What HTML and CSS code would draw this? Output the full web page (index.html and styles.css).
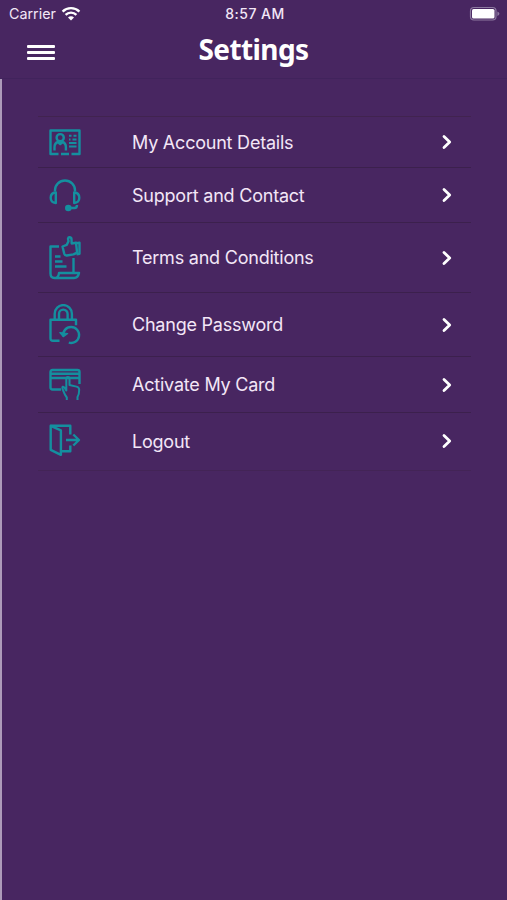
FILE: index.html
```html
<!DOCTYPE html>
<html lang="en">
<head>
    <meta charset="UTF-8">
    <meta name="viewport" content="width=device-width, initial-scale=1.0">
    <title>Settings</title>
    <link rel="stylesheet" href="styles.css">
</head>
<body>
    <div class="status-bar">
        <div class="carrier">
            <span>Carrier</span>
            <svg width="20" height="16" viewBox="0 0 20 16">
                <path d="M1.6 5.6a12 12 0 0 1 16.8 0M4.6 8.9a7.6 7.6 0 0 1 10.8 0" fill="none" stroke="#fff" stroke-width="2.4"/>
                <path d="M10 14.6l-3-3a4.2 4.2 0 0 1 6 0z" fill="#fff"/>
            </svg>
        </div>
        <span class="time">8:57 AM</span>
        <svg class="battery" width="32" height="16" viewBox="0 0 32 16">
            <rect x="1.5" y="1.5" width="25.5" height="12.5" rx="3.5" fill="none" stroke="#8d79a0" stroke-width="1.2"/>
            <rect x="3" y="3" width="22.5" height="9.5" rx="1.6" fill="#fff"/>
            <path d="M28.4 5.4V10q2-.8 2-2.3t-2-2.3z" fill="#8d79a0"/>
        </svg>
    </div>

    <header class="header">
        <button class="menu-btn" aria-label="Menu">
            <span></span>
            <span></span>
            <span></span>
        </button>
        <h1>Settings</h1>
    </header>

    <main class="content">
        <ul class="settings-list">
            <li class="settings-item account">
                <svg class="icon" width="32" height="27" viewBox="0 0 32 27">
                    <path d="M9.5 25H1.5V1.5h29V25h-8M12 25h8"/>
                    <circle cx="11.2" cy="8.7" r="3.6"/>
                    <path d="M5.5 21.5v-3.2q0-4.3 3.5-5.3l2.2 2 2.2-2q3.5 1 3.5 5.3v3.2"/>
                    <path d="M20 6.8h2.5M24.5 6.8h3M20 10.4h1.5M23.5 10.4h4M20 14h7.5M20 17.6h7.5" stroke-width="2"/>
                </svg>
                <span class="label">My Account Details</span>
                <svg class="arrow" width="12" height="16" viewBox="0 0 12 16"><path d="M3 2.5L8.7 8 3 13.5"/></svg>
            </li>
            <li class="settings-item support">
                <svg class="icon" width="32" height="34" viewBox="0 0 32 34">
                    <path d="M6 13.5v-1.3a10 9.7 0 0 1 20 0v1.3"/>
                    <path d="M6.8 14.5V25q-5.1-.3-5.1-5.2t5.1-5.3zM25.2 14.5V25q5.1-.3 5.1-5.2t-5.1-5.3z"/>
                    <path d="M20 30h5.5q2.5 0 2.5-3"/>
                    <circle cx="19.3" cy="30" r="2.1" fill="#148f9f"/>
                </svg>
                <span class="label">Support and Contact</span>
                <svg class="arrow" width="12" height="16" viewBox="0 0 12 16"><path d="M3 2.5L8.7 8 3 13.5"/></svg>
            </li>
            <li class="settings-item terms">
                <svg class="icon" width="32" height="44" viewBox="0 0 32 44">
                    <path d="M10 10.5H1.5v27q0 4.5 4 4.5H25q4 0 5-5H10q-.5 5-4.5 5"/>
                    <path d="M24.5 22v15"/>
                    <path d="M6 20.5h5.5M6 25.5h7.5M6 30.5h11.5"/>
                    <path d="M13.5 10.5l4.2-1.6 1.8-3.6-.5-2.6q.3-1.6 1.8-1.4 1.7.3 1.7 2.2l.2 4 4.3-.7 1.1 9.8-3.6 1.8-6.7 1.1q-2 .2-2.6-2z"/>
                    <path d="M27.2 7.3l3.3-.6v11l-3 .6"/>
                </svg>
                <span class="label">Terms and Conditions</span>
                <svg class="arrow" width="12" height="16" viewBox="0 0 12 16"><path d="M3 2.5L8.7 8 3 13.5"/></svg>
            </li>
            <li class="settings-item password">
                <svg class="icon" width="32" height="42" viewBox="0 0 32 42">
                    <path d="M5.7 15v-5.3a8.6 8.6 0 0 1 17.2 0V15M10 15V9.9a4.3 4.3 0 0 1 8.6 0V15"/>
                    <path d="M10.5 36.8H4q-2.5 0-2.5-2.5V15.7H27v5.5"/>
                    <path d="M14.2 32.3a8 8 0 1 1 5.6 6.4"/>
                    <path d="M10.8 28.5l3.5 4.2 4.4-3.2z" fill="#148f9f" stroke-width="1.2"/>
                </svg>
                <span class="label">Change Password</span>
                <svg class="arrow" width="12" height="16" viewBox="0 0 12 16"><path d="M3 2.5L8.7 8 3 13.5"/></svg>
            </li>
            <li class="settings-item card">
                <svg class="icon" width="32" height="34" viewBox="0 0 32 34">
                    <path d="M12 21.5H3.5q-2 0-2-2V4q0-2 2-2h25q2 0 2 2v12"/>
                    <path d="M2 5.8h28M2 10h28"/>
                    <path d="M17.8 32v-2.5q-2-2.4-3.6-6.8-1.5-3.3-.4-4 1.2-.4 2.4 2l1.1 1.8V10.8q0-1.8 1.6-1.8t1.6 1.8V17l7 1.6q2.7.7 2.7 3.2 0 4.5-1.7 7.2v3" stroke-width="2"/>
                </svg>
                <span class="label">Activate My Card</span>
                <svg class="arrow" width="12" height="16" viewBox="0 0 12 16"><path d="M3 2.5L8.7 8 3 13.5"/></svg>
            </li>
            <li class="settings-item logout">
                <svg class="icon" width="32" height="34" viewBox="0 0 32 34">
                    <path d="M1.7 1.8h19.6v8.7M21.3 21.5v5.7h-9"/>
                    <path d="M1.7 1.8l10.2 4.6v24.4L1.7 25.8z"/>
                    <path d="M17 16h12.5M24.3 10.5L30 16l-5.7 5.5"/>
                </svg>
                <span class="label">Logout</span>
                <svg class="arrow" width="12" height="16" viewBox="0 0 12 16"><path d="M3 2.5L8.7 8 3 13.5"/></svg>
            </li>
        </ul>
    </main>
</body>
</html>
```

FILE: styles.css
```css
* {
    box-sizing: border-box;
}

body {
    font-family: Inter, 'Liberation Sans', sans-serif;
    margin: 0;
    height: 900px;
    display: flex;
    flex-direction: column;
    overflow: hidden;
    background-color: #482661;
    color: #f3e6f7;
}

.status-bar {
    display: grid;
    grid-template-columns: 1fr auto 1fr;
    align-items: center;
    height: 27px;
    padding: 0 6px 0 9px;
    font-size: 14.3px;
}

.carrier {
    display: flex;
    align-items: center;
    gap: 5px;
}

.time {
    font-weight: 500;
    font-size: 14px;
    letter-spacing: 0.5px;
}

.battery {
    justify-self: end;
}

.header {
    display: grid;
    grid-template-columns: 60px 1fr 60px;
    align-items: center;
    height: 52px;
    padding-bottom: 7px;
    border-bottom: 1px solid #41235c;
}

.header h1 {
    margin: 0;
    font-family: 'Noto Sans', sans-serif;
    font-size: 28px;
    font-weight: 700;
    line-height: 40px;
    letter-spacing: -0.6px;
    text-align: center;
    color: #fff;
}

.menu-btn {
    display: flex;
    flex-direction: column;
    gap: 3px;
    width: 28px;
    margin: 6px 0 0 27px;
    padding: 0;
    border: none;
    background: none;
}

.menu-btn span {
    height: 3px;
    border-radius: 1px;
    background-color: #fff;
}

.content {
    flex: 1;
    padding: 37px 36px 0;
    border-left: 2px solid #ad9bb9;
}

.settings-list {
    list-style: none;
    margin: 0;
    padding: 0;
    border-top: 1px solid #41234f;
}

.settings-item {
    display: flex;
    align-items: center;
    height: 55px;
    padding: 0 18px 0 11px;
    border-bottom: 1px solid #3c204d;
}

.account {
    height: 51px;
}

.terms {
    height: 70px;
}

.password {
    height: 64px;
}

.card {
    height: 56px;
}

.logout {
    height: 58px;
    padding-bottom: 1px;
    border-bottom-color: #432456;
}

.icon {
    fill: none;
    stroke: #148f9f;
    stroke-width: 2.4;
    stroke-linejoin: round;
}

.label {
    flex: 1;
    margin-left: 51px;
    font-size: 18px;
    letter-spacing: -0.22px;
}

.arrow {
    fill: none;
    stroke: #fff;
    stroke-width: 2.8;
    stroke-linecap: round;
    stroke-linejoin: round;
}
```
